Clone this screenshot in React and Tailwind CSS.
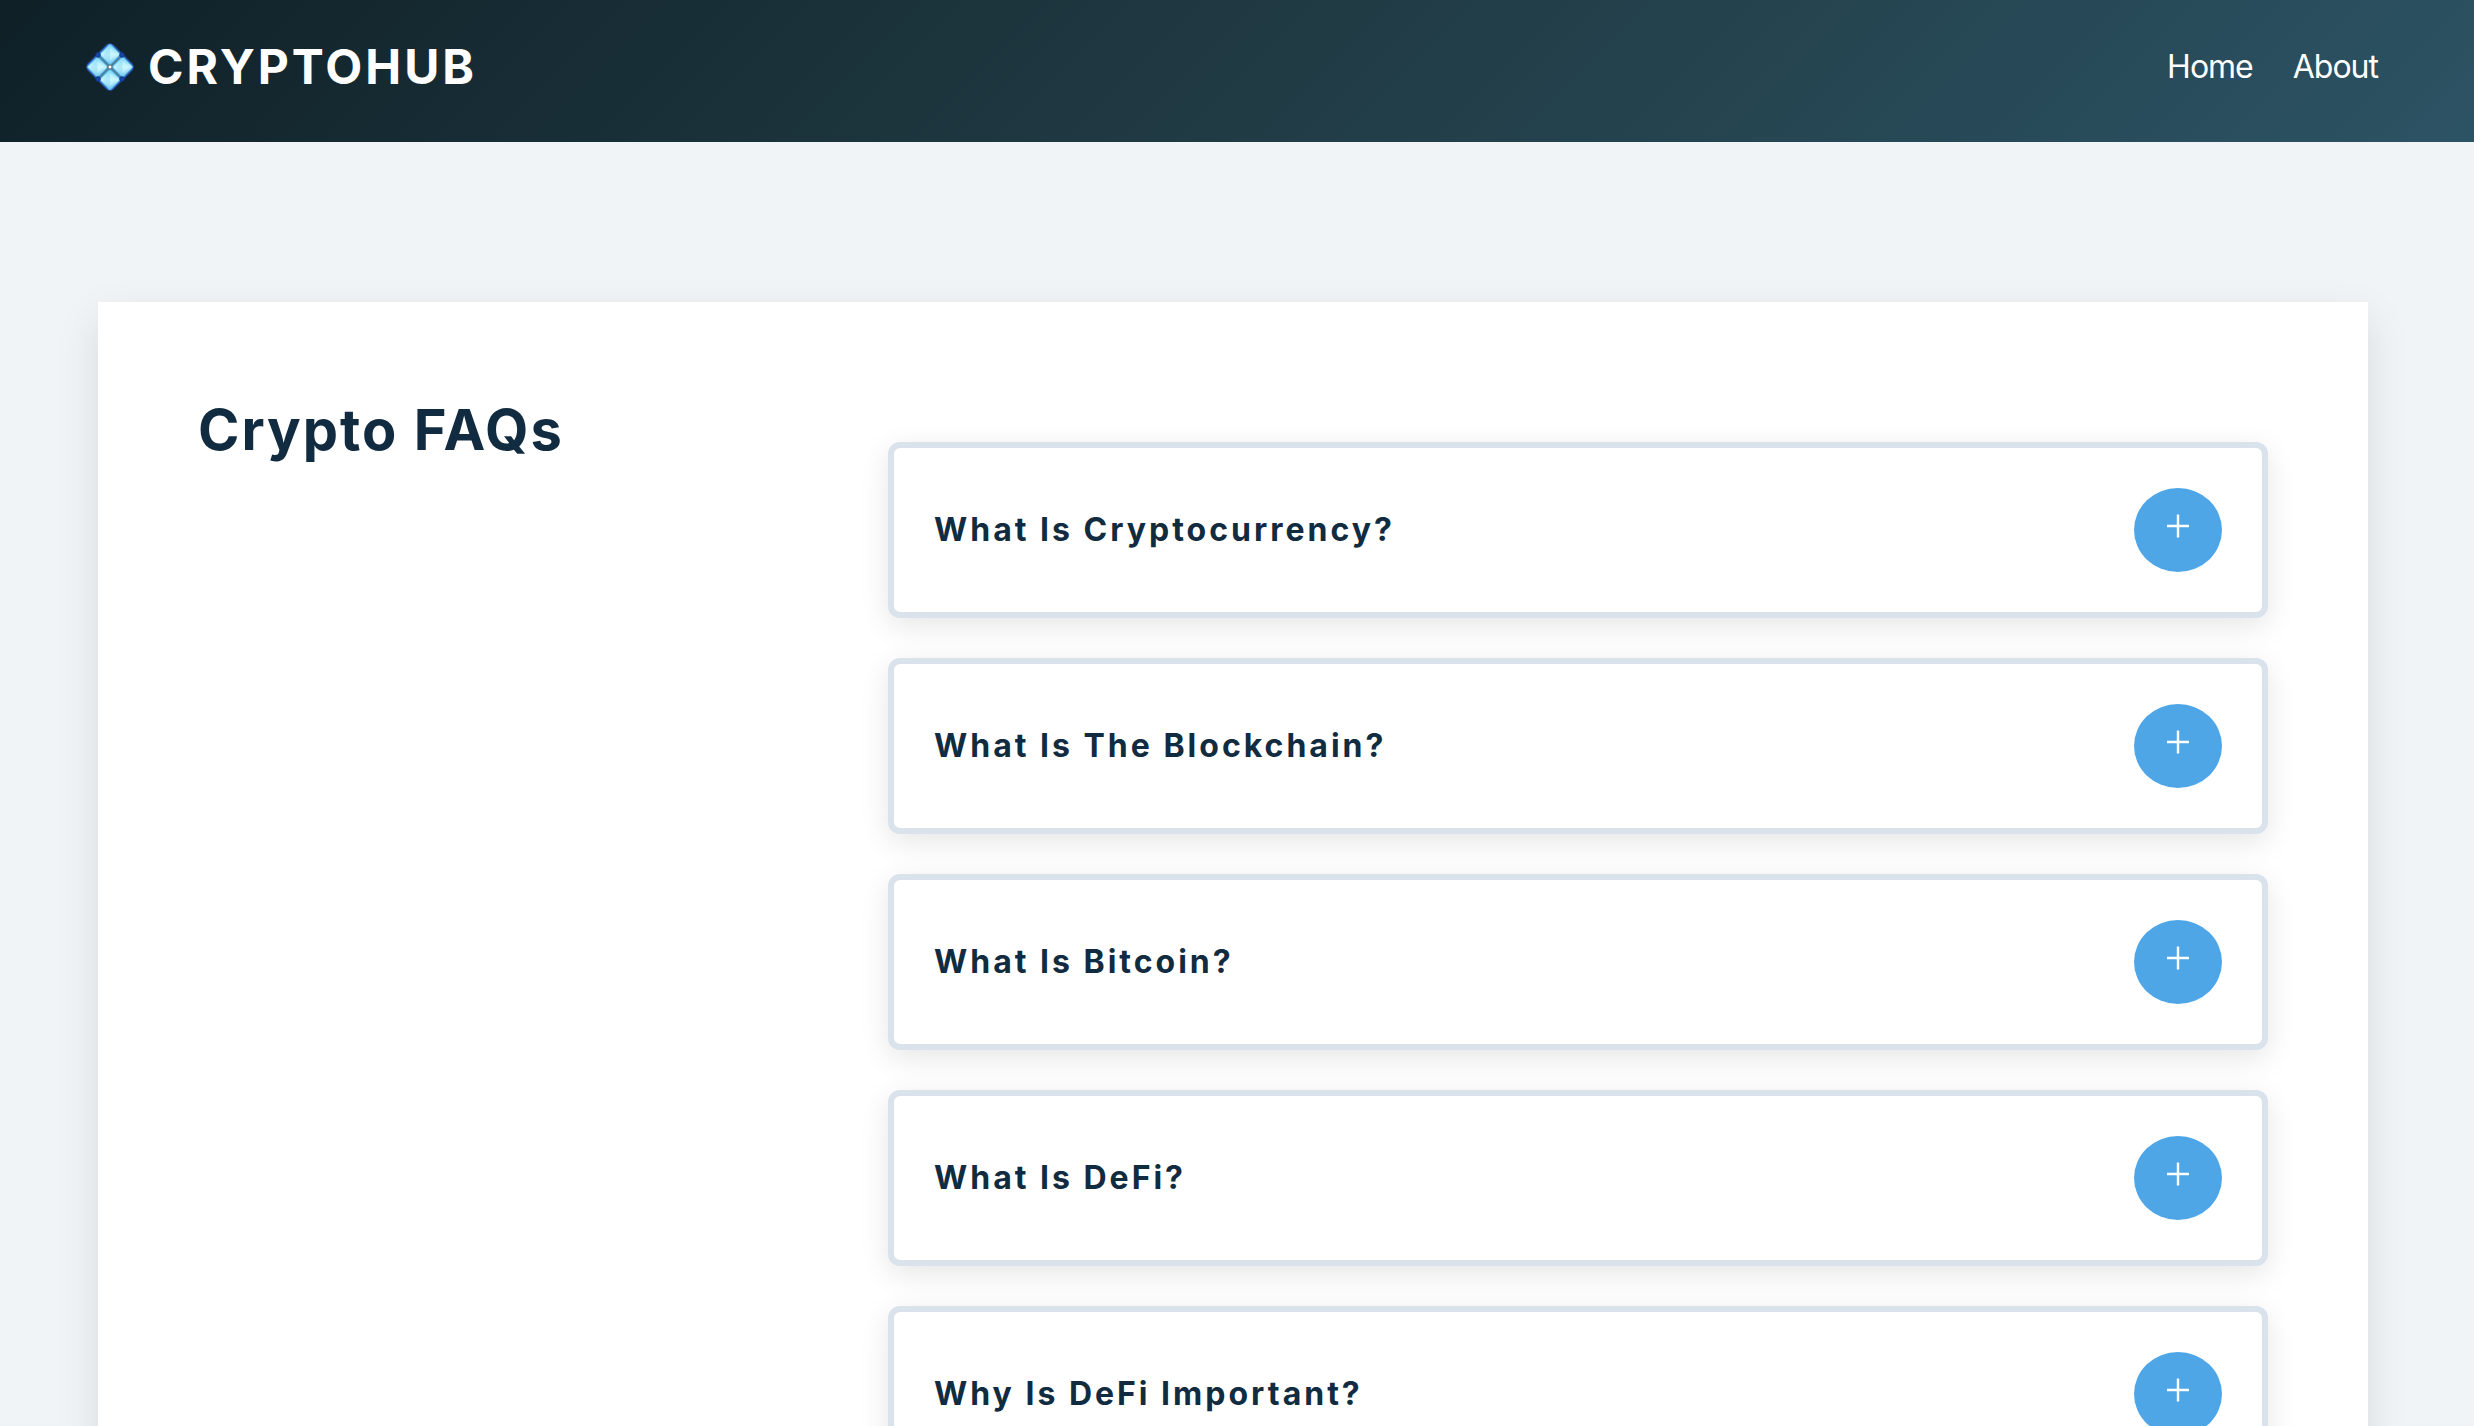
const questions = [
  "What Is Cryptocurrency?",
  "What Is The Blockchain?",
  "What Is Bitcoin?",
  "What Is DeFi?",
  "Why Is DeFi Important?",
];

function Logo() {
  return (
    <svg viewBox="0 0 48 48" className="size-12" aria-hidden="true">
      <defs>
        <linearGradient id="gem" x1="0" y1="0" x2="1" y2="1">
          <stop offset="0" stopColor="#74d4f8" />
          <stop offset="0.5" stopColor="#c4f4fc" />
          <stop offset="1" stopColor="#6cc6f0" />
        </linearGradient>
      </defs>
      <g transform="rotate(45 24 24)">
        <rect x="6.4" y="6.4" width="35.2" height="35.2" rx="4.5" fill="#4c7f96" stroke="#2450b4" strokeWidth="1.5" />
        {[[7.6, 7.6], [25.4, 7.6], [7.6, 25.4], [25.4, 25.4]].map(([x, y]) => (
          <g key={`${x}-${y}`}>
            <rect x={x} y={y} width="15" height="15" rx="2" fill="url(#gem)" stroke="#58b4ea" strokeWidth="1" />
            <path d={`M${x + 3} ${y + 3}h9v9z`} fill="#d4fafd" opacity="0.55" />
            <path d={`M${x + 3} ${y + 3}v9h9z`} fill="#a0e2f8" opacity="0.6" />
          </g>
        ))}
      </g>
      {[[12, 12], [36, 12], [12, 36], [36, 36]].map(([x, y]) => (
        <circle key={`${x}-${y}`} cx={x} cy={y} r="2.4" fill="#1746a8" stroke="#0d2f7c" strokeWidth="0.6" />
      ))}
      <circle cx="24" cy="24" r="2" fill="#fff" stroke="#6b6f6c" strokeWidth="1" />
    </svg>
  );
}

function FaqItem({ question }) {
  return (
    <li className="flex items-center justify-between rounded-xl border-6 border-[#dae2ec] bg-white p-10 shadow-[0_8px_30px_rgba(0,0,0,0.1)]">
      <h3 className="text-[32px] leading-10 font-bold tracking-[3px]">{question}</h3>
      <button
        type="button"
        aria-label={question}
        className="flex h-21 w-22 items-center justify-center rounded-[50%] bg-[#4fa6e7] pb-2 text-white"
      >
        <svg viewBox="0 0 24 24" className="size-6" fill="none" stroke="currentColor" strokeWidth="2.4" aria-hidden="true">
          <path d="M12 0.5v23M1 12h22" />
        </svg>
      </button>
    </li>
  );
}

export default function App() {
  return (
    <div className="min-h-screen bg-[#f0f4f7] font-['Inter',sans-serif] text-[#112b40]">
      <header className="flex items-center justify-between bg-[linear-gradient(135deg,#0f2027,#203a43,#2c5364)] pt-8 pr-24 pb-10 pl-[86px] text-white">
        <a href="#" className="flex items-center gap-[14px]">
          <Logo />
          <span className="text-[48px] leading-[70px] font-bold tracking-[3px]">CRYPTOHUB</span>
        </a>
        <nav className="flex gap-10 text-[32px] leading-10 tracking-[-1px]">
          <a href="#home">Home</a>
          <a href="#about">About</a>
        </nav>
      </header>
      <main className="mt-40 mr-[106px] ml-[98px] grid grid-cols-[1fr_2fr] bg-white p-[100px] shadow-[0_16px_40px_rgba(0,0,0,0.1)]">
        <h2 className="text-[56px] leading-14 font-bold tracking-[2px]">Crypto FAQs</h2>
        <ul className="flex flex-col gap-10 pt-10">
          {questions.map((question) => (
            <FaqItem key={question} question={question} />
          ))}
        </ul>
      </main>
    </div>
  );
}
